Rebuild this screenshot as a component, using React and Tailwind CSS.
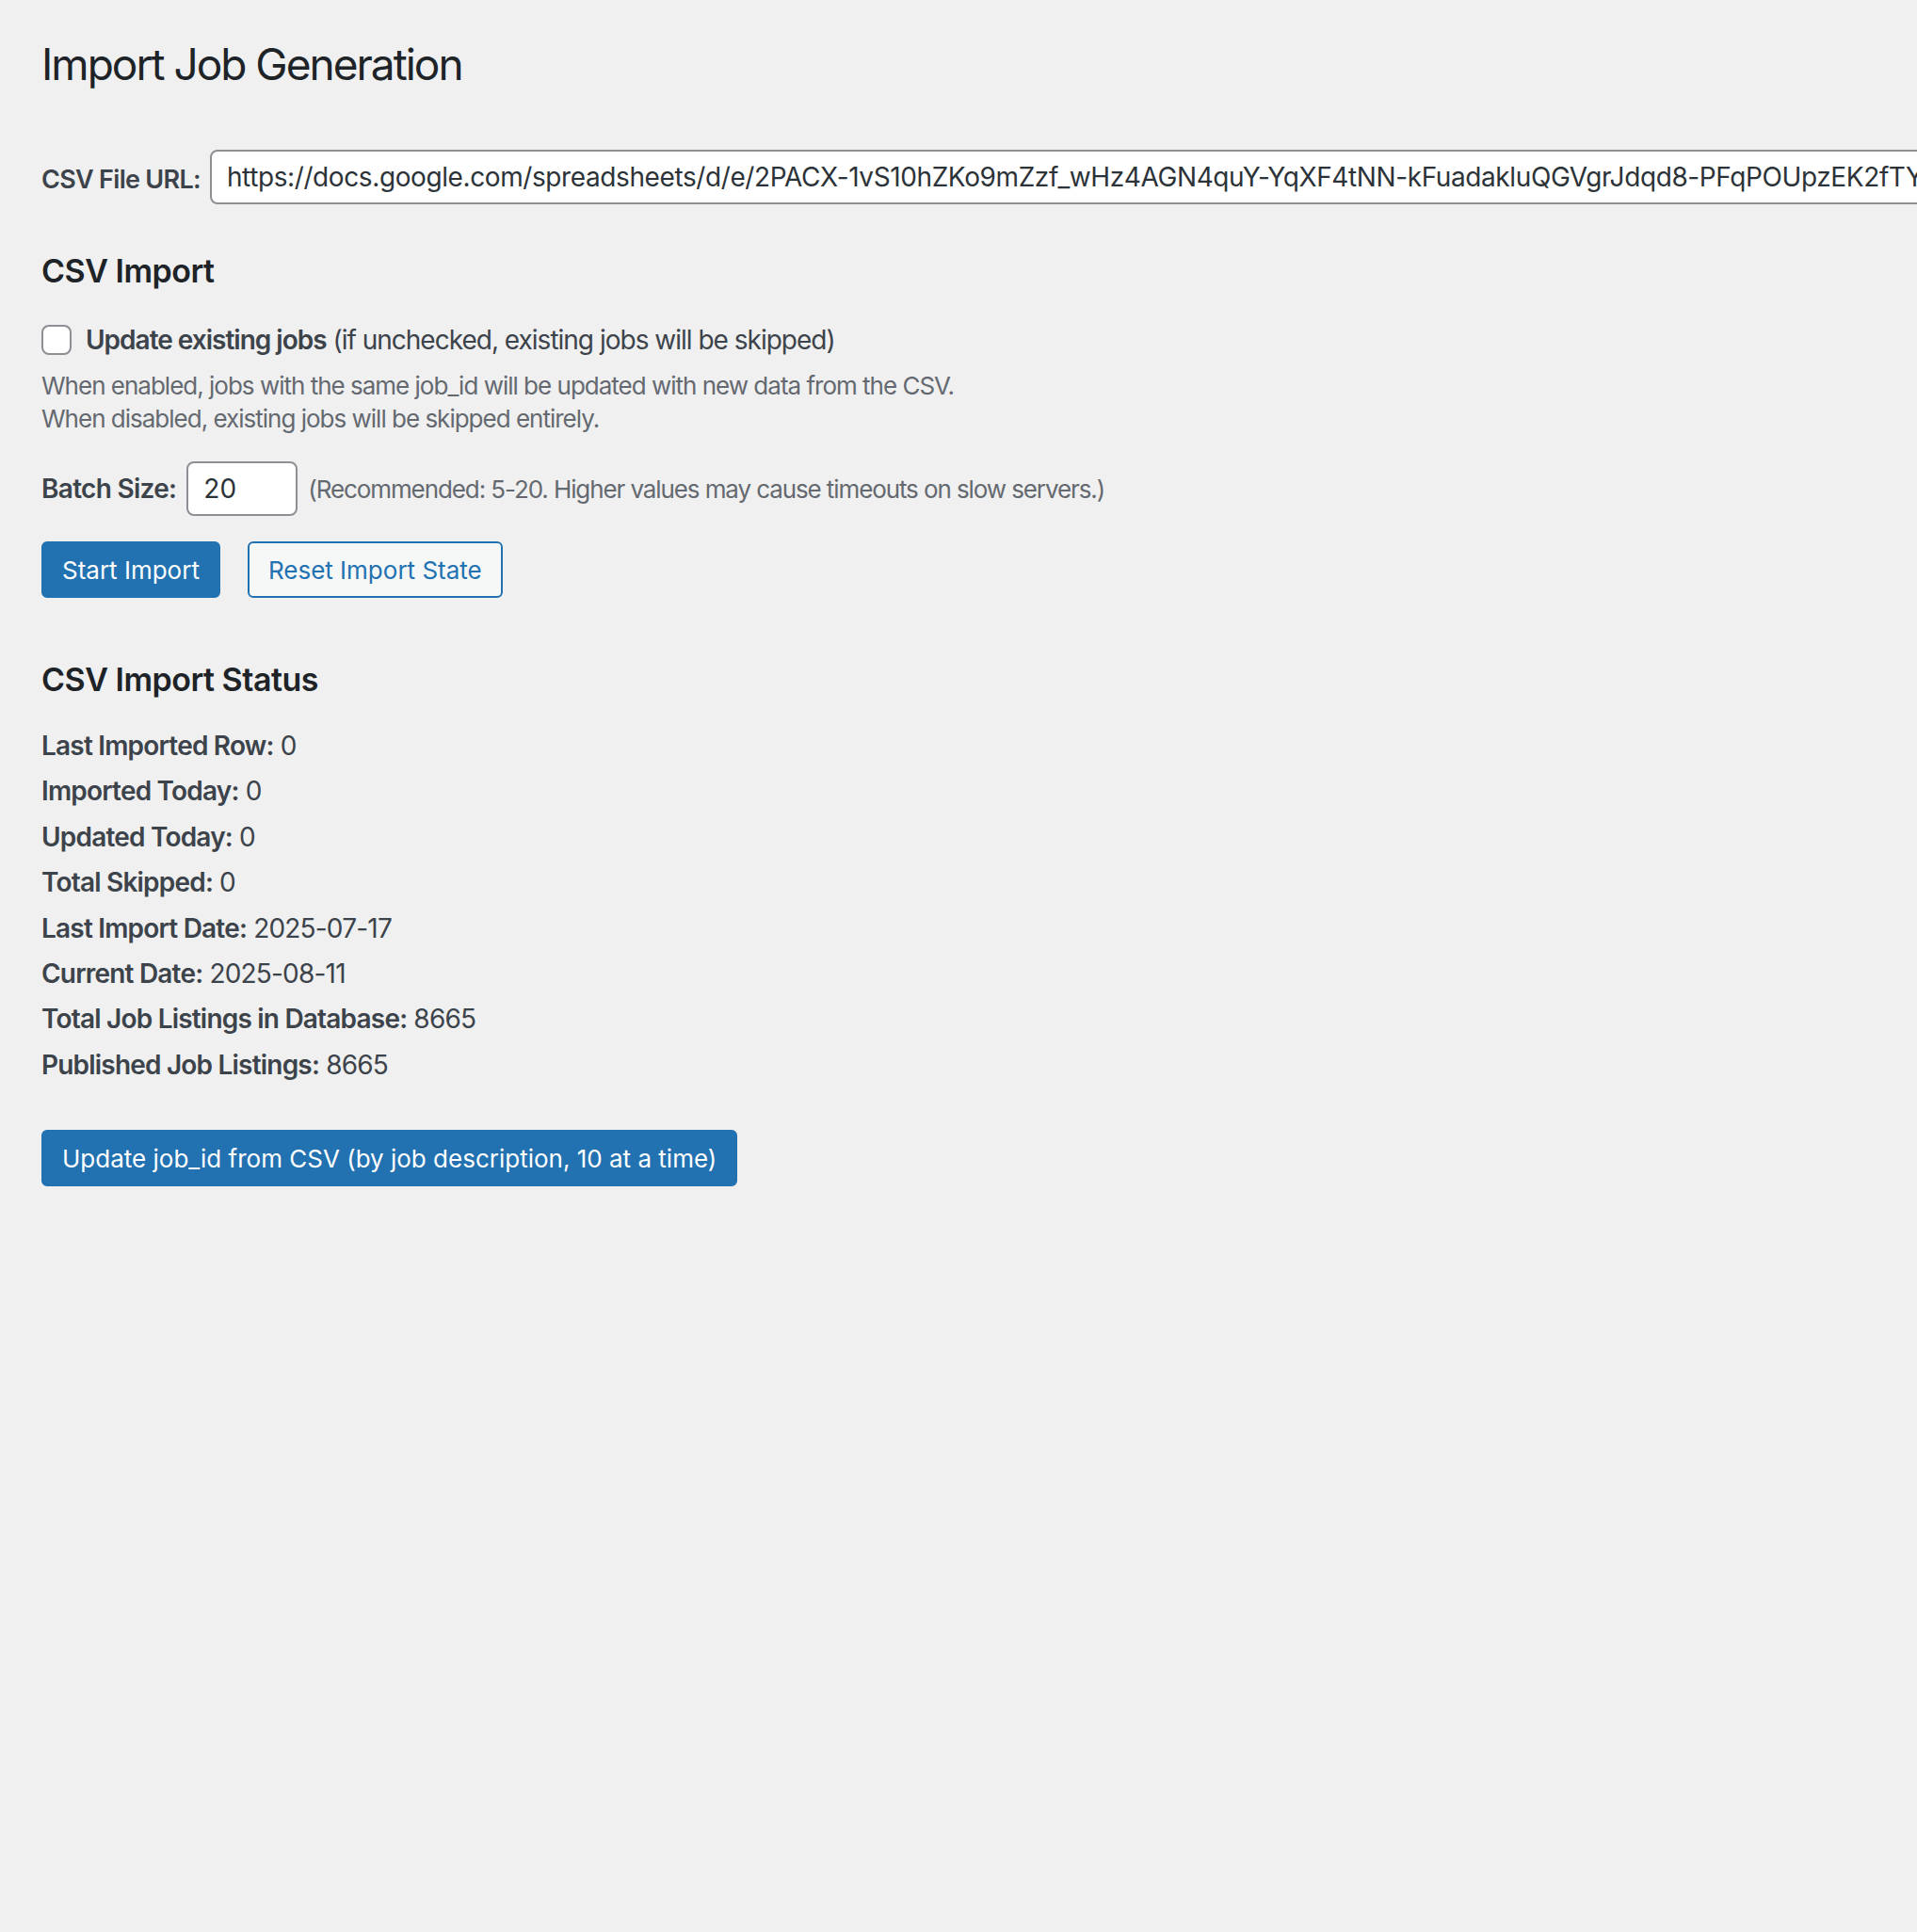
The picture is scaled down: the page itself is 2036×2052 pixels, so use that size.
import React from "react";

const csvUrl =
  "https://docs.google.com/spreadsheets/d/e/2PACX-1vS10hZKo9mZzf_wHz4AGN4quY-YqXF4tNN-kFuadakluQGVgrJdqd8-PFqPOUpzEK2fTYdwSWJ3dXkUrVjZ/pub?output=csv";

const statusRows = [
  ["Last Imported Row:", "0"],
  ["Imported Today:", "0"],
  ["Updated Today:", "0"],
  ["Total Skipped:", "0"],
  ["Last Import Date:", "2025-07-17"],
  ["Current Date:", "2025-08-11"],
  ["Total Job Listings in Database:", "8665"],
  ["Published Job Listings:", "8665"],
];

function App() {
  return (
    <div className="min-h-[2052px] w-full overflow-hidden bg-[#f0f0f1] pl-[44px] font-['Inter',sans-serif] text-[#3c434a]">
      <h1 className="mt-[38px] text-[46px] font-normal leading-[60px] tracking-[-2px] text-[#1d2327]">
        Import Job Generation
      </h1>

      <div className="mt-[61px] flex items-center gap-[10px]">
        <label className="shrink-0 whitespace-nowrap pt-[6px] text-[27px] font-semibold tracking-[-0.7px] text-[#3c434a]">
          CSV File URL:
        </label>
        <input
          type="text"
          readOnly
          value={csvUrl}
          className="h-[58px] w-[2200px] shrink-0 rounded-[8px] border-2 border-[#8c8f94] bg-white px-[16px] text-[28px] tracking-[-0.4px] text-[#2c3338] outline-none"
        />
      </div>

      <h2 className="mt-[49px] text-[34px] font-semibold leading-[44px] tracking-[-0.5px] text-[#1d2327]">
        CSV Import
      </h2>

      <div className="mt-[30px] flex items-center gap-[15px]">
        <span className="block h-[32px] w-[32px] shrink-0 rounded-[8px] border-2 border-[#8c8f94] bg-white" />
        <span className="text-[28px] tracking-[-1px] text-[#3c434a]">
          <span className="font-semibold">Update existing jobs</span> (if unchecked, existing jobs will be skipped)
        </span>
      </div>

      <p className="mt-[10px] text-[26px] leading-[35px] tracking-[-1px] text-[#646970]">
        When enabled, jobs with the same job_id will be updated with new data from the CSV.
        <br />
        When disabled, existing jobs will be skipped entirely.
      </p>

      <div className="mt-[28px] flex items-center gap-[11px]">
        <label className="text-[28px] font-semibold tracking-[-0.7px] text-[#3c434a]">Batch Size:</label>
        <input
          type="text"
          readOnly
          value="20"
          className="h-[58px] w-[118px] rounded-[8px] border-2 border-[#8c8f94] bg-white px-[16px] text-[28px] text-[#2c3338] outline-none"
        />
        <span className="text-[26px] tracking-[-1.1px] text-[#646970]">
          (Recommended: 5-20. Higher values may cause timeouts on slow servers.)
        </span>
      </div>

      <div className="mt-[27px] flex items-center gap-[29px]">
        <button className="h-[60px] rounded-[6px] border-2 border-[#2271b1] bg-[#2271b1] px-[20px] text-[26px] text-white">
          Start Import
        </button>
        <button className="h-[60px] rounded-[6px] border-2 border-[#2271b1] bg-[#f6f7f7] px-[20px] text-[26px] text-[#2271b1]">
          Reset Import State
        </button>
      </div>

      <h2 className="mt-[65px] text-[34px] font-semibold leading-[44px] tracking-[-0.5px] text-[#1d2327]">
        CSV Import Status
      </h2>

      <div className="mt-[24px]">
        {statusRows.map(([label, value]) => (
          <p key={label} className="text-[28px] leading-[48.4px] tracking-[-0.8px]">
            <span className="font-semibold">{label}</span> {value}
          </p>
        ))}
      </div>

      <button className="mt-[45px] h-[60px] rounded-[6px] border-2 border-[#2271b1] bg-[#2271b1] px-[20px] text-[26px] text-white">
        Update job_id from CSV (by job description, 10 at a time)
      </button>
    </div>
  );
}

export default App;
